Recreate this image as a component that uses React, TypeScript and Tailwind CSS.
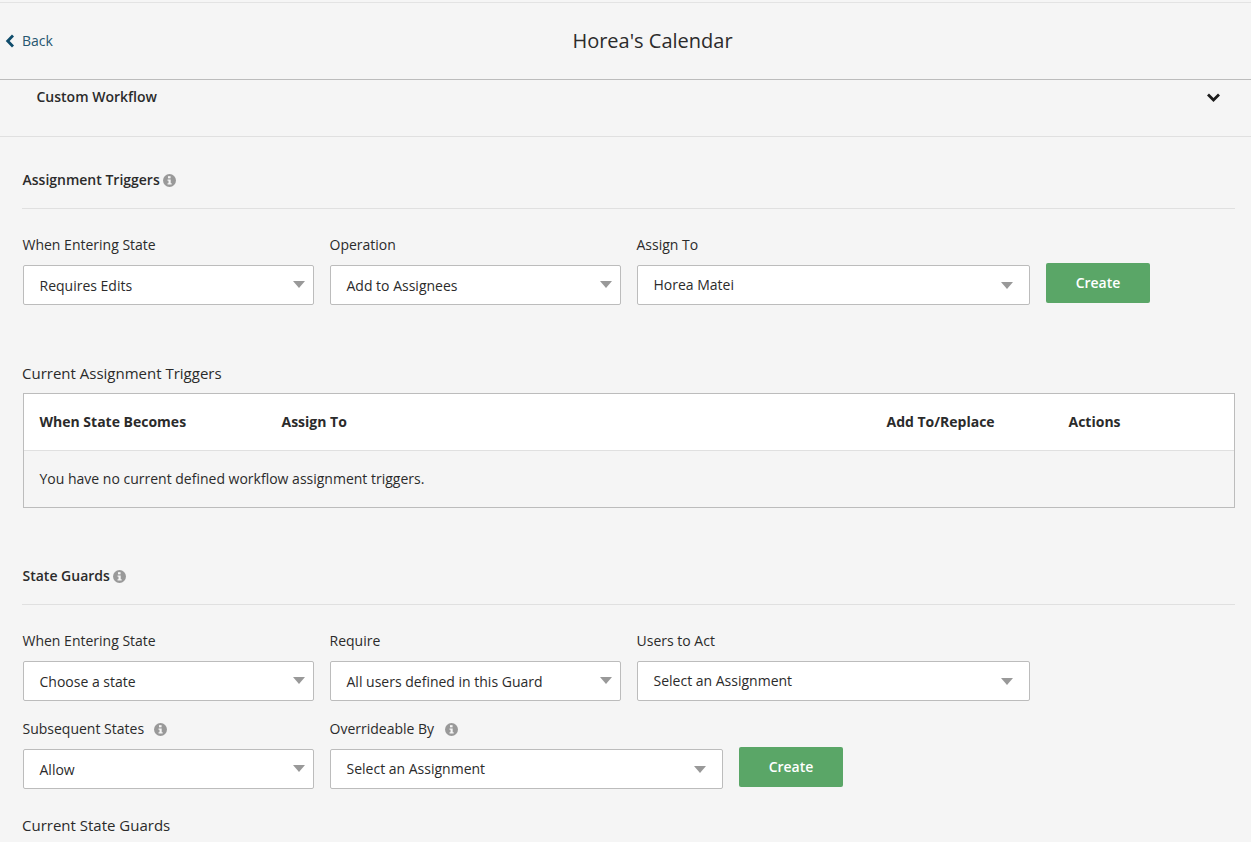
import React from "react";

function Info({ className = "" }: { className?: string }) {
  return (
    <svg viewBox="0 0 12 12" className={"w-[13px] h-[13px] inline-block shrink-0 " + className}>
      <circle cx="6" cy="6" r="6" fill="#999999" />
      <rect x="4.6" y="2" width="2.4" height="2" fill="#f5f5f5" />
      <path d="M4.2 5h2.9v3.6h.9v1.2H4.2V8.6h.9V6.2h-.9z" fill="#f5f5f5" />
    </svg>
  );
}

function Select({ text, className, wide = false }: { text: string; className: string; wide?: boolean }) {
  return (
    <div
      className={
        "h-10 bg-white border border-[#bcbcbc] rounded-[2px] flex items-center justify-between pl-[15.5px] shrink-0 " +
        (wide ? "pr-4 " : "pr-2 ") +
        className
      }
    >
      <span className={"text-[14px] text-[#2b2b2b] " + (wide ? "mb-[1px]" : "mt-[1px]")}>{text}</span>
      <svg viewBox="0 0 12 7" className={"w-3 h-[7px] " + (wide ? "" : "mb-[1px]")}>
        <path d="M0 0h12L6 7z" fill="#999999" />
      </svg>
    </div>
  );
}

function Label({ children, className }: { children: React.ReactNode; className: string }) {
  return <div className={"text-[14px] leading-5 text-[#2b2b2b] flex items-center shrink-0 " + className}>{children}</div>;
}

function Create() {
  return (
    <button className="w-[104px] h-10 pb-[2px] bg-[#5aa667] text-white text-[14px] font-semibold rounded-[2px] shrink-0">
      Create
    </button>
  );
}

export default function App() {
  return (
    <div className="h-[842px] overflow-hidden bg-[#f5f5f5] text-[#2b2b2b] font-['Open_Sans',sans-serif]">
      <header className="mt-[2px] h-[78px] pb-[1px] border-t border-b border-t-[#e3e3e3] border-b-[#bcbcbc] flex items-center relative">
        <div className="flex items-center pl-[5px] gap-[7px] text-[14px] text-[#27566f]">
          <svg viewBox="0 0 10 14" className="w-[10px] h-[14px]">
            <path d="M8 1.5 2.7 7 8 12.5" fill="none" stroke="#0f4c6b" strokeWidth="2.8" />
          </svg>
          <span>Back</span>
        </div>
        <h1 className="absolute inset-x-0 pl-[54px] text-center text-[20px] text-[#2b2b2b]">Horea's Calendar</h1>
      </header>

      <div className="h-[57px] border-b border-[#e0e0e0] flex items-start justify-between pl-[36.5px] pr-[31px] pt-[7px]">
        <span className="text-[14px] font-semibold leading-5">Custom Workflow</span>
        <svg viewBox="0 0 13 9" className="w-[13px] h-[9px] mt-[6px]">
          <path d="M1 1.5 6.5 7 12 1.5" fill="none" stroke="#1c1c1c" strokeWidth="2.8" />
        </svg>
      </div>

      <main className="pl-[23px] pr-4">
        <section className="pt-[33px]">
          <div className="h-[39px] border-b border-[#e0e0e0] flex items-start gap-[3px] -ml-px pl-[0.5px]">
            <span className="text-[14px] font-semibold leading-5 text-[#2b2b2b]">Assignment Triggers</span>
            <Info className="mt-[3.5px]" />
          </div>
          <div className="flex gap-4 pt-[26px] -ml-[0.5px]">
            <Label className="w-[291px]">When Entering State</Label>
            <Label className="w-[291px]">Operation</Label>
            <Label className="w-[393px]">Assign To</Label>
          </div>
          <div className="flex gap-4 mt-[10px] items-start">
            <Select text="Requires Edits" className="w-[291px]" />
            <Select text="Add to Assignees" className="w-[291px]" />
            <Select text="Horea Matei" className="w-[393px]" wide />
            <div className="-mt-[2px]"><Create /></div>
          </div>
        </section>

        <section className="pt-[58px]">
          <div className="text-[15px] leading-5 -ml-px">Current Assignment Triggers</div>
          <div className="mt-[10px] h-[115px] border border-[#bcbcbc]">
            <div className="h-[57px] pb-[2px] bg-white border-b border-[#e0e0e0] flex items-center pl-[15.5px] text-[14px] font-bold">
              <span className="w-[242px]">When State Becomes</span>
              <span className="w-[605px]">Assign To</span>
              <span className="w-[182px]">Add To/Replace</span>
              <span>Actions</span>
            </div>
            <div className="h-[56px] pb-[2px] flex items-center pl-[15.5px] text-[14px]">
              You have no current defined workflow assignment triggers.
            </div>
          </div>
        </section>

        <section className="pt-[58px]">
          <div className="h-[39px] border-b border-[#e0e0e0] flex items-start gap-[3px] -ml-px pl-[0.5px]">
            <span className="text-[14px] font-semibold leading-5">State Guards</span>
            <Info className="mt-[3.5px]" />
          </div>
          <div className="flex gap-4 pt-[26px] -ml-[0.5px]">
            <Label className="w-[291px]">When Entering State</Label>
            <Label className="w-[291px]">Require</Label>
            <Label className="w-[393px]">Users to Act</Label>
          </div>
          <div className="flex gap-4 mt-[10px]">
            <Select text="Choose a state" className="w-[291px]" />
            <Select text="All users defined in this Guard" className="w-[291px]" />
            <Select text="Select an Assignment" className="w-[393px]" wide />
          </div>
          <div className="flex gap-4 mt-[18px] -ml-[0.5px]">
            <Label className="w-[291px] gap-[10px]">Subsequent States<Info /></Label>
            <Label className="w-[393px] gap-[11px]">Overrideable By<Info /></Label>
          </div>
          <div className="flex gap-4 mt-[10px] items-start">
            <Select text="Allow" className="w-[291px]" />
            <Select text="Select an Assignment" className="w-[393px]" wide />
            <div className="-mt-[2px]"><Create /></div>
          </div>
          <div className="text-[15px] leading-5 -ml-px mt-[26px]">Current State Guards</div>
        </section>
      </main>
    </div>
  );
}
